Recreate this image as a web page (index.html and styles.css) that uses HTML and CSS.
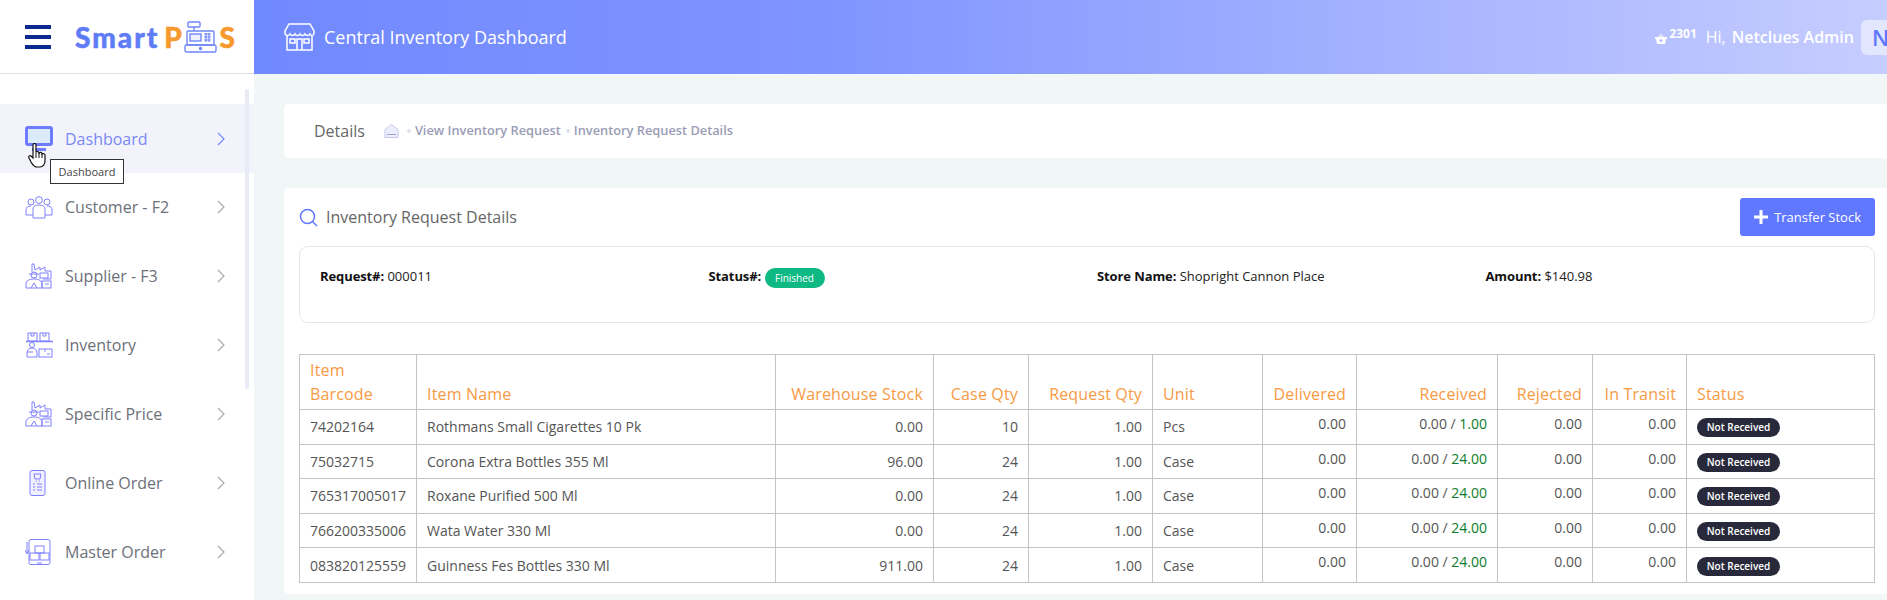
FILE: index.html
```html
<!DOCTYPE html>
<html lang="en">
<head>
    <meta charset="UTF-8">
    <title>Inventory Request Details</title>
    <link rel="stylesheet" href="styles.css">
</head>
<body>
    <!-- Top bar -->
    <header class="topbar">
        <div class="brand">
            <div class="burger"><span></span><span></span><span></span></div>
            <div class="logo">
                <span class="logo-blue">Smart</span>
                <span class="logo-orange">P</span>
                <svg class="logo-till" viewBox="0 0 33 32" fill="none" stroke="#6f86fb" stroke-width="1.4">
                    <rect x="4" y="1" width="12" height="5" rx="1"/>
                    <path d="M10 6v4"/>
                    <rect x="3" y="10" width="27" height="14" rx="1"/>
                    <rect x="6" y="13" width="11" height="7" fill="#eef1ff"/>
                    <path d="M20 13h7M20 16h7M20 19h7M22 12v9M25 12v9" stroke-width="1.2"/>
                    <rect x="1" y="24" width="31" height="7" rx="1.5"/>
                    <circle cx="16.5" cy="27.5" r="1" fill="#6f86fb"/>
                </svg>
                <span class="logo-orange">S</span>
            </div>
        </div>
        <div class="bar">
            <svg class="store-icon" viewBox="0 0 31 28" fill="none" stroke="#fff" stroke-width="1.5">
                <path d="M5 1h21l4 7v2c0 3-3 3-4 1-1 2-4 2-5 0-1 2-4 2-5 0-1 2-4 2-5 0-1 2-4 2-5 0-1 2-5 2-5-1V8z"/>
                <path d="M3 13v14h25V13"/>
                <rect x="6" y="16" width="5" height="4"/>
                <rect x="20" y="16" width="5" height="4"/>
                <path d="M13 27V16h5v11"/>
            </svg>
            <h1 class="bar-title">Central Inventory Dashboard</h1>
            <div class="user">
                <svg class="basket" viewBox="0 0 12 13">
                    <path d="M3 5l3-4 3 4z" fill="#dfe3ff"/>
                    <path d="M0 5h12v2h-1l-1 5H2L1 7H0z" fill="#fff"/>
                    <circle cx="6" cy="8.6" r="1.4" fill="#a9b5ff"/>
                </svg>
                <span class="count">2301</span>
                <span class="hi">Hi,</span>
                <span class="name">Netclues Admin</span>
                <span class="avatar">N</span>
            </div>
        </div>
    </header>

    <div class="layout">
        <!-- Menu lateral -->
        <nav class="sidebar">
            <div class="thumb"></div>
            <a class="item active">
                <svg class="icon" viewBox="0 0 28 26">
                    <rect x="1.5" y="1.5" width="25" height="17" rx="1.5" fill="#dcebfb" stroke="#6d7cff" stroke-width="3"/>
                    <rect x="7" y="22" width="14" height="3" fill="#6d7cff"/>
                </svg>
                <span>Dashboard</span>
                <svg class="chev" viewBox="0 0 8 14"><path d="M1 1l6 6-6 6"/></svg>
            </a>
            <a class="item">
                <svg class="icon" viewBox="0 0 28 26" fill="none" stroke="#7f80ff">
                    <circle cx="6" cy="8" r="3"/><circle cx="14" cy="6" r="3.4"/><circle cx="22" cy="8" r="3"/>
                    <path d="M1 21v-5c0-3 2-4 5-4M27 21v-5c0-3-2-4-5-4M1 21h7M27 21h-7"/>
                    <path d="M8 24v-9c0-3 3-4 6-4s6 1 6 4v9z"/>
                </svg>
                <span>Customer - F2</span>
                <svg class="chev" viewBox="0 0 8 14"><path d="M1 1l6 6-6 6"/></svg>
            </a>
            <a class="item">
                <svg class="icon" viewBox="0 0 28 26" fill="none" stroke="#7f80ff">
                    <path d="M7 9V1h2l1 6 5-3v3l5-3v4h6v8H18"/>
                    <rect x="15" y="10" width="8" height="5"/>
                    <circle cx="9" cy="12" r="3"/>
                    <path d="M4 11h10M1 25v-4c0-3 3-5 8-5s8 2 8 5v4zM6 25l3-5 3 5"/>
                    <rect x="17" y="18" width="9" height="7"/>
                    <path d="M20 21h4"/>
                </svg>
                <span>Supplier - F3</span>
                <svg class="chev" viewBox="0 0 8 14"><path d="M1 1l6 6-6 6"/></svg>
            </a>
            <a class="item">
                <svg class="icon" viewBox="0 0 28 26" fill="none" stroke="#7f80ff">
                    <rect x="3" y="1" width="9" height="8"/><rect x="15" y="1" width="9" height="8"/>
                    <path d="M6 1v3h3V1M18 1v3h3V1"/>
                    <path d="M1 9.500h27" stroke-width="1.500"/>
                    <circle cx="7" cy="13" r="2.500"/>
                    <path d="M2 25v-4c0-3 2-5 5-5s5 2 5 5v4zM2 20h6"/>
                    <rect x="14" y="17" width="13" height="8"/>
                    <path d="M20 17v3M22 22h3"/>
                </svg>
                <span>Inventory</span>
                <svg class="chev" viewBox="0 0 8 14"><path d="M1 1l6 6-6 6"/></svg>
            </a>
            <a class="item">
                <svg class="icon" viewBox="0 0 28 26" fill="none" stroke="#7f80ff">
                    <path d="M7 9V1h2l1 6 5-3v3l5-3v4h6v8H18"/>
                    <rect x="15" y="10" width="8" height="5"/>
                    <circle cx="9" cy="12" r="3"/>
                    <path d="M4 11h10M1 25v-4c0-3 3-5 8-5s8 2 8 5v4zM6 25l3-5 3 5"/>
                    <rect x="17" y="18" width="9" height="7"/>
                    <path d="M20 21h4"/>
                </svg>
                <span>Specific Price</span>
                <svg class="chev" viewBox="0 0 8 14"><path d="M1 1l6 6-6 6"/></svg>
            </a>
            <a class="item">
                <svg class="icon" viewBox="0 0 28 26" fill="none" stroke="#7f80ff">
                    <rect x="5" y="0.500" width="15" height="25" rx="2" fill="#f0f0ff"/>
                    <path d="M9 4h7l-1 5h-5zM11 11h1M14 11h1"/>
                    <path d="M8 14h2M12 14h5M8 17h2M12 17h5M8 20h2M12 20h5"/>
                </svg>
                <span>Online Order</span>
                <svg class="chev" viewBox="0 0 8 14"><path d="M1 1l6 6-6 6"/></svg>
            </a>
            <a class="item">
                <svg class="icon" viewBox="0 0 28 26" fill="none" stroke="#7f80ff">
                    <rect x="4" y="0.500" width="21" height="25" rx="2"/>
                    <rect x="10" y="7" width="9" height="7"/>
                    <rect x="5" y="14" width="9" height="7"/><rect x="15" y="14" width="9" height="7"/>
                    <path d="M2 3v11M0 11l2 4 2-4M12 24h5"/>
                </svg>
                <span>Master Order</span>
                <svg class="chev" viewBox="0 0 8 14"><path d="M1 1l6 6-6 6"/></svg>
            </a>
            <div class="tooltip">Dashboard</div>
            <svg class="hand" viewBox="0 0 18 25">
                <path d="M5 2c0-2 3-2 3 0v7c2-1 3 0 3 1 1-1 3-1 3 1 1-1 3 0 3 1v6c0 3-2 6-5 6H9c-3 0-4-2-6-5l-2-4c-1-2 1-3 2-2l2 2z" fill="#fff" stroke="#111" stroke-width="1.200"/>
                <path d="M8 10v5M11 10v5M14 11v4" stroke="#111"/>
            </svg>
        </nav>

        <main class="content">
            <section class="crumbs">
                <h2 class="crumbs-title">Details</h2>
                <svg class="home" viewBox="0 0 15 14" fill="#eceefb" stroke="#c5c8ea">
                    <path d="M1 5.500l6.500-5 6.500 5v8H1z"/>
                    <path d="M3 10.500h9" stroke="#9ea4d8"/>
                </svg>
                <span class="dot"></span>
                <span class="crumb">View Inventory Request</span>
                <span class="dot"></span>
                <span class="crumb">Inventory Request Details</span>
            </section>

            <section class="card">
                <div class="card-head">
                    <svg class="search" viewBox="0 0 19 19" fill="none" stroke="#5f78ff" stroke-width="1.500">
                        <circle cx="8.500" cy="8.500" r="7"/>
                        <path d="M13.500 13.500l4.500 4.500"/>
                    </svg>
                    <h3 class="card-title">Inventory Request Details</h3>
                    <button class="btn-transfer">
                        <svg viewBox="0 0 14 14"><path d="M5.500 0h3v5.500H14v3H8.500V14h-3V8.500H0v-3h5.500z" fill="#fff"/></svg>
                        Transfer Stock
                    </button>
                </div>

                <div class="info">
                    <div><b>Request#:</b> 000011</div>
                    <div><b>Status#:</b> <span class="badge finished">Finished</span></div>
                    <div><b>Store Name:</b> Shopright Cannon Place</div>
                    <div><b>Amount:</b> $140.98</div>
                </div>

                <table class="items">
                    <colgroup>
                        <col class="w-code"><col class="w-name"><col class="w-stock"><col class="w-case"><col class="w-req">
                        <col class="w-unit"><col class="w-del"><col class="w-rec"><col class="w-rej"><col class="w-tra"><col>
                    </colgroup>
                    <thead>
                        <tr>
                            <th>Item Barcode</th>
                            <th>Item Name</th>
                            <th class="num">Warehouse Stock</th>
                            <th class="num">Case Qty</th>
                            <th class="num">Request Qty</th>
                            <th>Unit</th>
                            <th class="num">Delivered</th>
                            <th class="num">Received</th>
                            <th class="num">Rejected</th>
                            <th class="num">In Transit</th>
                            <th>Status</th>
                        </tr>
                    </thead>
                    <tbody>
                        <tr>
                            <td>74202164</td><td>Rothmans Small Cigarettes 10 Pk</td><td class="num">0.00</td><td class="num">10</td><td class="num">1.00</td><td>Pcs</td>
                            <td class="num up">0.00</td><td class="num up">0.00 / <span class="green">1.00</span></td><td class="num up">0.00</td><td class="num up">0.00</td>
                            <td><span class="badge waiting">Not Received</span></td>
                        </tr>
                        <tr>
                            <td>75032715</td><td>Corona Extra Bottles 355 Ml</td><td class="num">96.00</td><td class="num">24</td><td class="num">1.00</td><td>Case</td>
                            <td class="num up">0.00</td><td class="num up">0.00 / <span class="green">24.00</span></td><td class="num up">0.00</td><td class="num up">0.00</td>
                            <td><span class="badge waiting">Not Received</span></td>
                        </tr>
                        <tr>
                            <td>765317005017</td><td>Roxane Purified 500 Ml</td><td class="num">0.00</td><td class="num">24</td><td class="num">1.00</td><td>Case</td>
                            <td class="num up">0.00</td><td class="num up">0.00 / <span class="green">24.00</span></td><td class="num up">0.00</td><td class="num up">0.00</td>
                            <td><span class="badge waiting">Not Received</span></td>
                        </tr>
                        <tr>
                            <td>766200335006</td><td>Wata Water 330 Ml</td><td class="num">0.00</td><td class="num">24</td><td class="num">1.00</td><td>Case</td>
                            <td class="num up">0.00</td><td class="num up">0.00 / <span class="green">24.00</span></td><td class="num up">0.00</td><td class="num up">0.00</td>
                            <td><span class="badge waiting">Not Received</span></td>
                        </tr>
                        <tr>
                            <td>083820125559</td><td>Guinness Fes Bottles 330 Ml</td><td class="num">911.00</td><td class="num">24</td><td class="num">1.00</td><td>Case</td>
                            <td class="num up">0.00</td><td class="num up">0.00 / <span class="green">24.00</span></td><td class="num up">0.00</td><td class="num up">0.00</td>
                            <td><span class="badge waiting">Not Received</span></td>
                        </tr>
                    </tbody>
                </table>
            </section>
        </main>
    </div>
</body>
</html>
```

FILE: styles.css
```css
* {
    box-sizing: border-box;
}

html, body {
    height: 100%;
}

body {
    margin: 0;
    font-family: "Open Sans", "Liberation Sans", sans-serif;
    background-color: #f1f6f7;
    color: #555;
    overflow: hidden;
}

/* Top bar */
.topbar {
    display: flex;
    height: 74px;
}

.brand {
    width: 254px;
    flex: none;
    display: flex;
    align-items: center;
    padding-left: 25px;
    background-color: #fff;
    border-bottom: 1px solid #ddd;
}

.burger {
    width: 26px;
    height: 24px;
    margin-right: 24px;
    display: flex;
    flex-direction: column;
    justify-content: space-between;
}

.burger span {
    height: 4px;
    background-color: #0b2a8f;
}

.logo {
    display: flex;
    align-items: center;
    font-family: Lato, sans-serif;
    font-weight: 900;
    font-size: 28px;
    line-height: 1;
    letter-spacing: 0.6px;
    -webkit-text-stroke: 0.5px currentColor;
}

.logo-blue {
    color: #5f7cf7;
    margin-right: 5px;
    letter-spacing: 2px;
}

.logo-orange {
    color: #f79a2e;
}

.logo-till {
    width: 33px;
    height: 32px;
    margin: 0 2px;
}

.bar {
    flex: 1;
    display: flex;
    align-items: center;
    padding-left: 30px;
    background: linear-gradient(90deg, #7189ff 0%, #7f94ff 35%, #c6cdff 100%);
    color: #fff;
}

.store-icon {
    width: 31px;
    height: 28px;
    margin-right: 9px;
}

.bar-title {
    margin: 0;
    font-size: 18px;
    font-weight: 400;
}

.user {
    margin-left: auto;
    display: flex;
    align-items: center;
    margin-right: -26px;
    font-size: 16px;
}

.basket {
    width: 12px;
    height: 13px;
    margin-right: 2px;
    margin-top: 2px;
}

.count {
    font-size: 12px;
    font-weight: 700;
    margin-top: -8px;
    margin-right: 9px;
}

.hi {
    margin-right: 6px;
}

.name {
    font-weight: 600;
}

.avatar {
    width: 52px;
    height: 35px;
    margin-left: 7px;
    padding-left: 11px;
    border-radius: 6px;
    background-color: rgba(255, 255, 255, 0.5);
    color: #5f78ff;
    font-size: 22px;
    font-weight: 600;
    line-height: 35px;
}

.layout {
    display: flex;
    height: 526px;
}

/* Menu lateral */
.sidebar {
    position: relative;
    width: 254px;
    flex: none;
    padding-top: 30px;
    background-color: #fff;
}

.thumb {
    position: absolute;
    left: 245px;
    top: 15px;
    width: 4px;
    height: 300px;
    border-radius: 2px;
    background-color: #e8eaf6;
}

.item {
    display: flex;
    align-items: center;
    height: 69px;
    padding: 0 29px 2px 25px;
    font-size: 16px;
    color: #6c7079;
}

.item span {
    flex: 1;
    margin-left: 12px;
}

.item.active {
    padding-bottom: 0;
    background-color: #f3f4fb;
    color: #7a88f5;
}

.icon {
    width: 28px;
    height: 26px;
}

.chev {
    width: 8px;
    height: 14px;
    fill: none;
    stroke: #aaa;
    stroke-width: 1.2;
}

.active .chev {
    stroke: #7189ff;
}

.tooltip {
    position: absolute;
    left: 50px;
    top: 85px;
    width: 74px;
    height: 25px;
    border: 1px solid #333;
    background-color: #fff;
    color: #444;
    font-size: 11px;
    line-height: 23px;
    text-align: center;
}

.hand {
    position: absolute;
    left: 28px;
    top: 69px;
    width: 18px;
    height: 25px;
}

/* Conteudo */
.content {
    flex: 1;
    min-width: 0;
    padding: 30px 0 0 30px;
}

.crumbs {
    display: flex;
    align-items: center;
    height: 54px;
    padding: 0 0 1px 30px;
    background-color: #fff;
    border-radius: 5px 0 0 5px;
}

.crumbs-title {
    margin: 0 19px 0 0;
    font-size: 16px;
    font-weight: 400;
    color: #666;
}

.home {
    width: 15px;
    height: 14px;
    margin-right: 8px;
}

.dot {
    width: 4px;
    height: 4px;
    border-radius: 50%;
    background-color: #e0e2ee;
    margin-right: 4px;
}

.crumb {
    margin-right: 5px;
    margin-bottom: 1px;
    font-size: 12.800px;
    font-weight: 600;
    color: #9a9db5;
}

.card {
    height: 406px;
    margin-top: 30px;
    padding: 10px 12px 0 15px;
    background-color: #fff;
    border-radius: 5px 0 0 5px;
}

.card-head {
    display: flex;
    align-items: center;
    height: 38px;
}

.search {
    width: 19px;
    height: 19px;
    margin-right: 8px;
}

.card-title {
    margin: 0;
    font-size: 16px;
    font-weight: 400;
    color: #666;
}

.btn-transfer {
    margin-left: auto;
    display: flex;
    align-items: center;
    height: 38px;
    padding: 0 14px;
    border: none;
    border-radius: 3px;
    background-color: #5f78ff;
    color: #fff;
    font-family: inherit;
    font-size: 13px;
}

.btn-transfer svg {
    width: 14px;
    height: 14px;
    margin-right: 6px;
}

.info {
    display: grid;
    grid-template-columns: repeat(4, 388.500px);
    height: 77px;
    margin: 10px 0 31px;
    padding: 20px 0 0 20px;
    border: 1px solid #e6e6ef;
    border-radius: 9px;
    font-size: 13px;
    color: #222;
}

.info b {
    color: #111;
    letter-spacing: -0.1px;
}

.badge {
    display: inline-block;
    border-radius: 10px;
    font-size: 10px;
    text-align: center;
    color: #fff;
}

.finished {
    width: 60px;
    height: 20px;
    line-height: 20px;
    background-color: #0fb983;
    vertical-align: -1px;
}

.waiting {
    width: 83px;
    height: 19px;
    line-height: 19px;
    font-weight: 600;
    background-color: #282a3c;
}

/* Tabela */
.items {
    width: 100%;
    table-layout: fixed;
    border-collapse: collapse;
    font-size: 14px;
    color: #555;
}

.w-code { width: 117px; }
.w-name { width: 359px; }
.w-stock { width: 158px; }
.w-case { width: 95px; }
.w-req { width: 124px; }
.w-unit { width: 110px; }
.w-del { width: 94px; }
.w-rec { width: 141px; }
.w-rej { width: 95px; }
.w-tra { width: 94px; }

th, td {
    border: 1px solid #c4c4c4;
    padding: 0 10px;
    text-align: left;
}

th {
    height: 55px;
    padding-bottom: 3px;
    vertical-align: bottom;
    font-size: 16px;
    font-weight: 400;
    line-height: 24px;
    letter-spacing: 0.16px;
    color: #f79a44;
}

td {
    height: 34.600px;
}

th.num, td.num {
    text-align: right;
}

td.up {
    vertical-align: top;
    padding-top: 4px;
}

.green {
    color: #0a7d2c;
}
```
